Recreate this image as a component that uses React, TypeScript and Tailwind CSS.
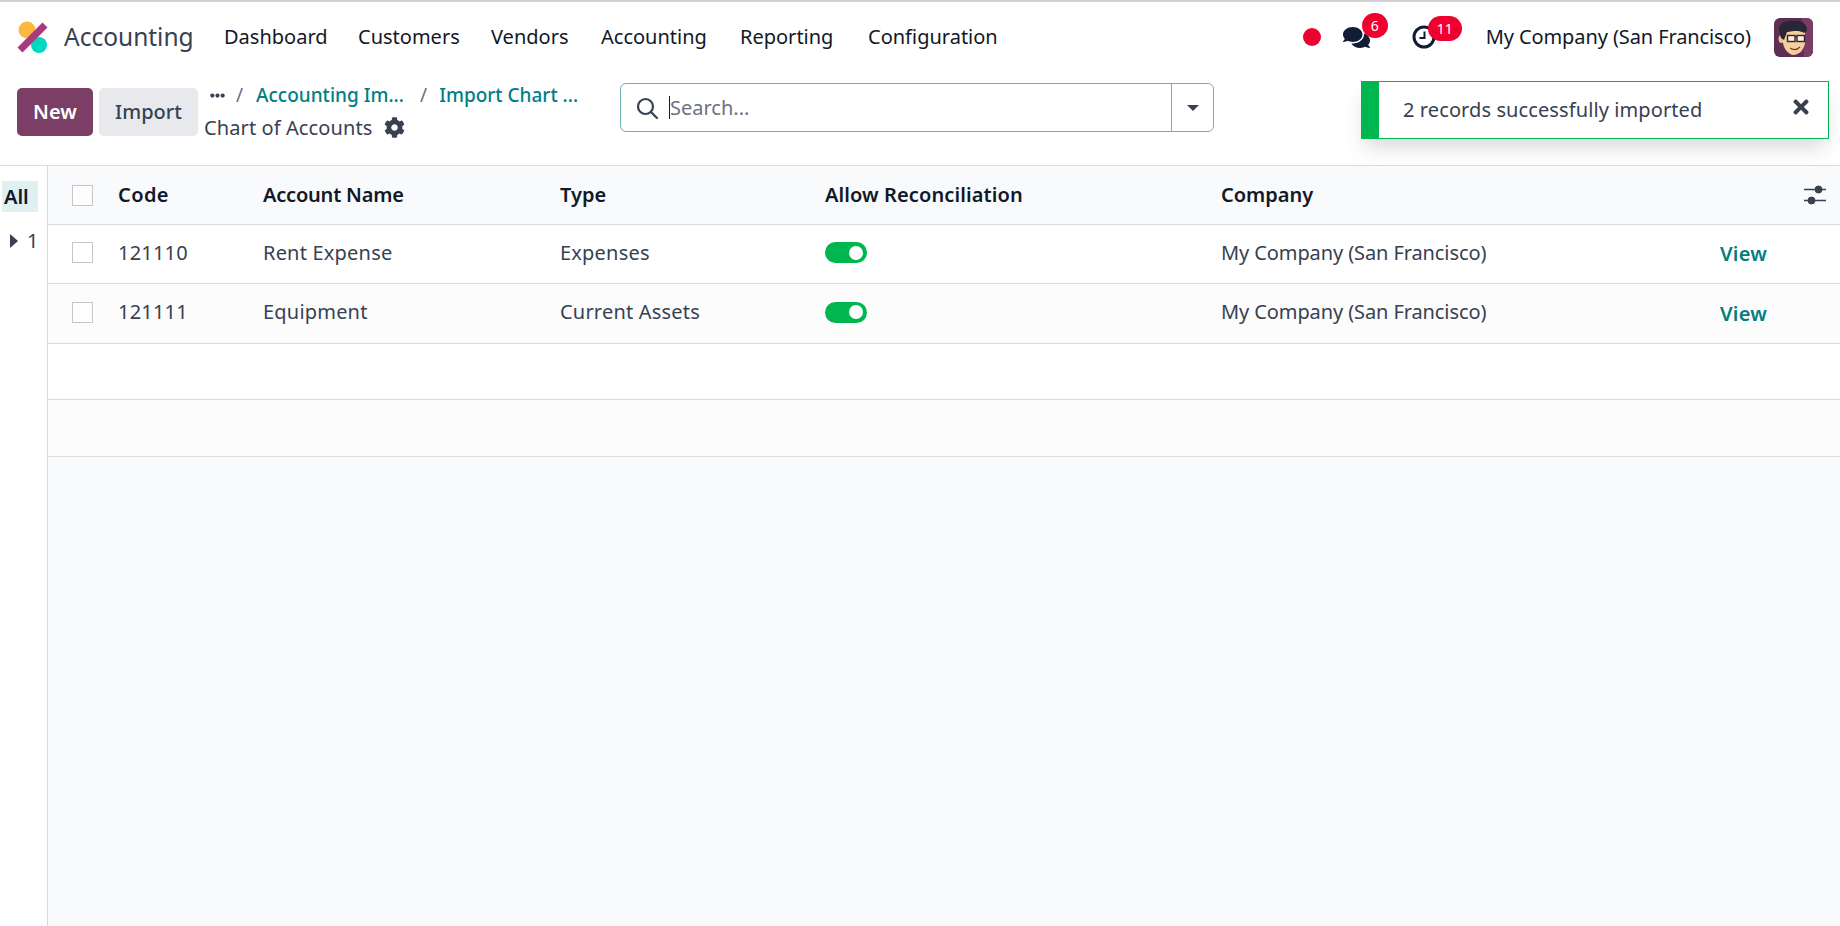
import { FaCog, FaComments, FaEllipsisH, FaTimes } from 'react-icons/fa';

const rowGrid = 'grid grid-cols-[70px_145px_297px_265px_396px_499px_1fr] items-center';
const navItems = [
  { label: 'Dashboard', cls: 'w-[134px]' },
  { label: 'Customers', cls: 'w-[133px]' },
  { label: 'Vendors', cls: 'w-[110px]' },
  { label: 'Accounting', cls: 'w-[139px]' },
  { label: 'Reporting', cls: 'w-[128px]' },
  { label: 'Configuration', cls: 'w-[140px]' },
];

const accounts = [
  { code: '121110', name: 'Rent Expense', type: 'Expenses', bg: 'bg-white', h: 'h-[59px]' },
  { code: '121111', name: 'Equipment', type: 'Current Assets', bg: 'bg-[#fcfcfc]', h: 'h-[60px]' },
];

function Logo() {
  return (
    <svg width="32" height="36" viewBox="0 0 32 36" className="shrink-0">
      <circle cx="11" cy="11" r="8.5" fill="#fbb93f" />
      <circle cx="23" cy="26" r="8" fill="#00d8c0" />
      <path d="M4 31 L29 6" stroke="#a93a80" strokeWidth="7" />
    </svg>
  );
}

function Avatar() {
  return (
    <svg width="39" height="39" viewBox="0 0 39 39" className="rounded-md">
      <rect width="39" height="39" fill="#5e2f54" />
      <path d="M28 0 H39 V39 H30 Z" fill="#7a3d63" />
      <ellipse cx="7.5" cy="21" rx="3" ry="4" fill="#f2c08c" />
      <path d="M9 13 L31 13 L31 25 C30 32 25 37 19 37 C14 36 10 31 9 25 Z" fill="#f7cf9f" />
      <path d="M5 13 C4 6 11 2 19 3 C25 1 34 5 33 13 L30 15 C25 12 20 13 13 14 L10 22 L7 20 C6 18 6 15 5 13 Z" fill="#2b2636" />
      <rect x="13.5" y="17.5" width="7.5" height="6" fill="#fdf0d8" stroke="#2b2636" strokeWidth="1.4" />
      <rect x="23" y="17.5" width="7.5" height="6" fill="#fdf0d8" stroke="#2b2636" strokeWidth="1.4" />
      <path d="M21 19 H23" stroke="#2b2636" strokeWidth="1.2" />
      <path d="M16 30 C19 32 23 32 26 29" stroke="#7a4030" strokeWidth="1.2" fill="none" />
    </svg>
  );
}

function Toggle() {
  return (
    <div className="w-[42px] h-[21px] rounded-full bg-[#00b74f] flex items-center justify-end pr-[4px]">
      <div className="w-[14px] h-[14px] rounded-full bg-white" />
    </div>
  );
}

function Checkbox() {
  return <div className="ml-6 w-[21px] h-[21px] border border-[#c4c6ca] bg-white/60" />;
}

export default function App() {
  return (
    <div className="relative w-[1840px] h-[926px] overflow-hidden bg-white flex flex-col border-t-2 border-[#cfcfcf] font-['Noto_Sans',sans-serif] text-[20px] text-[#374151]">
      {/* top menu */}
      <header className="h-[70px] shrink-0 flex items-center">
        <div className="pl-[16px] w-[64px]">
          <Logo />
        </div>
        <span className="w-[160px] text-[24.5px] text-[#374151]">Accounting</span>
        <nav className="flex text-[#111827]">
          {navItems.map((item) => (
            <span key={item.label} className={item.cls}>{item.label}</span>
          ))}
        </nav>
        <div className="ml-auto flex items-center">
          <span className="w-[18px] h-[18px] rounded-full bg-[#f0002f]" />
          <div className="relative ml-[22px] w-[27px] h-[26px] text-[#111c36]">
            <FaComments size={27} />
            <span className="absolute left-[19px] -top-[11px] w-[26px] h-[25px] rounded-full bg-[#f0002f] text-white text-[14px] flex items-center justify-center">6</span>
          </div>
          <div className="relative ml-[42px] w-[24px] h-[24px]">
            <svg width="24" height="24" viewBox="0 0 24 24" fill="none" stroke="#111c36" strokeWidth="3">
              <circle cx="12" cy="12" r="10" />
              <path d="M12.5 6.5 V13 H7.5" strokeWidth="2" />
            </svg>
            <span className="absolute left-[16px] -top-[9px] w-[34px] h-[25px] rounded-full bg-[#f0002f] text-white text-[14px] flex items-center justify-center">11</span>
          </div>
          <span className="ml-[50px] text-[#111827] tracking-[-0.1px]">My Company (San Francisco)</span>
          <div className="ml-[23px] mr-[27px] h-[39px]">
            <Avatar />
          </div>
        </div>
      </header>

      {/* control panel */}
      <div className="h-[94px] shrink-0 flex border-b border-[#d8dadd]">
        <div className="pl-[17px] pt-[16px] flex gap-[6px]">
          <button className="w-[76px] h-[48px] rounded-[5px] bg-[#7b3f65] text-white font-semibold">New</button>
          <button className="w-[99px] h-[48px] rounded-[5px] bg-[#e7e9ed] text-[#374151] font-medium">Import</button>
        </div>
        <div className="w-[422px] pl-[6px] pt-[7px] leading-[33px]">
          <div className="flex items-center h-[33px] text-[19px]">
            <FaEllipsisH size={15} className="ml-[6px] text-[#374151]" />
            <span className="ml-[11px] text-[#6b7280]">/</span>
            <span className="ml-[13px] w-[164px] font-medium text-[#017e84] whitespace-nowrap">Accounting Im...</span>
            <span className="text-[#6b7280]">/</span>
            <span className="ml-[12px] font-medium text-[#017e84] whitespace-nowrap">Import Chart ...</span>
          </div>
          <div className="flex items-center h-[33px] -mt-[1px]">
            <span className="tracking-[0.1px]">Chart of Accounts</span>
            <FaCog size={21} className="ml-[12px] text-[#374151]" />
          </div>
        </div>
        <div className="mt-[11px] w-[594px] h-[49px] rounded-[6px] border border-[#6fb0b3] flex">
          <div className="flex-1 flex items-center pl-[14px]">
            <svg width="24" height="24" viewBox="0 0 24 24" fill="none" stroke="#374151" strokeWidth="2.2" strokeLinecap="round">
              <circle cx="10.5" cy="10.5" r="7.5" />
              <path d="M16 16 L22 22" />
            </svg>
            <span className="ml-[10px] w-px h-[23px] bg-[#111827]" />
            <span className="text-[#6b7280]">Search...</span>
          </div>
          <div className="w-[42px] border-l border-[#6fb0b3] flex items-center justify-center">
            <span className="border-x-[6px] border-x-transparent border-t-[6px] border-t-[#374151]" />
          </div>
        </div>
      </div>

      {/* body */}
      <div className="flex-1 flex min-h-0">
        <aside className="w-[48px] shrink-0 bg-white border-r border-[#d8dadd] pt-[15px] pl-[2px]">
          <div className="w-[36px] h-[31px] bg-[#e0f0f1] font-semibold text-[#111827] flex items-center pl-[2px]">All</div>
          <div className="mt-[15px] h-[27px] flex items-center pl-[8px]">
            <span className="border-y-[7px] border-y-transparent border-l-[8px] border-l-[#374151]" />
            <span className="ml-[9px]">1</span>
          </div>
        </aside>
        <main className="flex-1 bg-[#f9fafb]">
          <div className={`${rowGrid} h-[59px] font-semibold text-[#111827] border-b border-[#d8dadd]`}>
            <Checkbox />
            <span className="tracking-[0.4px]">Code</span>
            <span className="tracking-[-0.2px]">Account Name</span>
            <span>Type</span>
            <span className="tracking-[0.1px]">Allow Reconciliation</span>
            <span className="flex items-center justify-between col-span-2 pr-[14px]">
              Company
              <svg width="22" height="20" viewBox="0 0 22 20" fill="none" stroke="#374151">
                <path d="M0 4.5 H22 M0 15.5 H22" strokeWidth="1.5" />
                <circle cx="14.5" cy="4.5" r="3.5" fill="#374151" />
                <circle cx="7.5" cy="15.5" r="3.5" fill="#374151" />
              </svg>
            </span>
          </div>
          {accounts.map((acc) => (
            <div key={acc.code} className={`${rowGrid} ${acc.h} ${acc.bg} pb-[3px] border-b border-[#d8dadd] tracking-[0.2px]`}>
              <Checkbox />
              <span>{acc.code}</span>
              <span>{acc.name}</span>
              <span>{acc.type}</span>
              <Toggle />
              <span className="tracking-[-0.1px]">My Company (San Francisco)</span>
              <span className="mt-[3px] font-semibold text-[#017e84] whitespace-nowrap">View</span>
            </div>
          ))}
          <div className="h-[56px] bg-white border-b border-[#d8dadd]" />
          <div className="h-[57px] bg-[#fcfcfc] border-b border-[#d8dadd]" />
        </main>
      </div>

      {/* notification */}
      <div className="absolute left-[1361px] top-[79px] w-[468px] h-[58px] bg-white border border-[#00b74f] shadow-[0_12px_20px_-4px_rgba(55,65,81,0.2)] flex items-center">
        <div className="w-[17px] h-full bg-[#00b74f] shrink-0" />
        <span className="ml-[24px] tracking-[0.1px]">2 records successfully imported</span>
        <FaTimes size={22} className="ml-auto mr-[16px] -mt-[6px] text-[#374151]" />
      </div>
    </div>
  );
}
